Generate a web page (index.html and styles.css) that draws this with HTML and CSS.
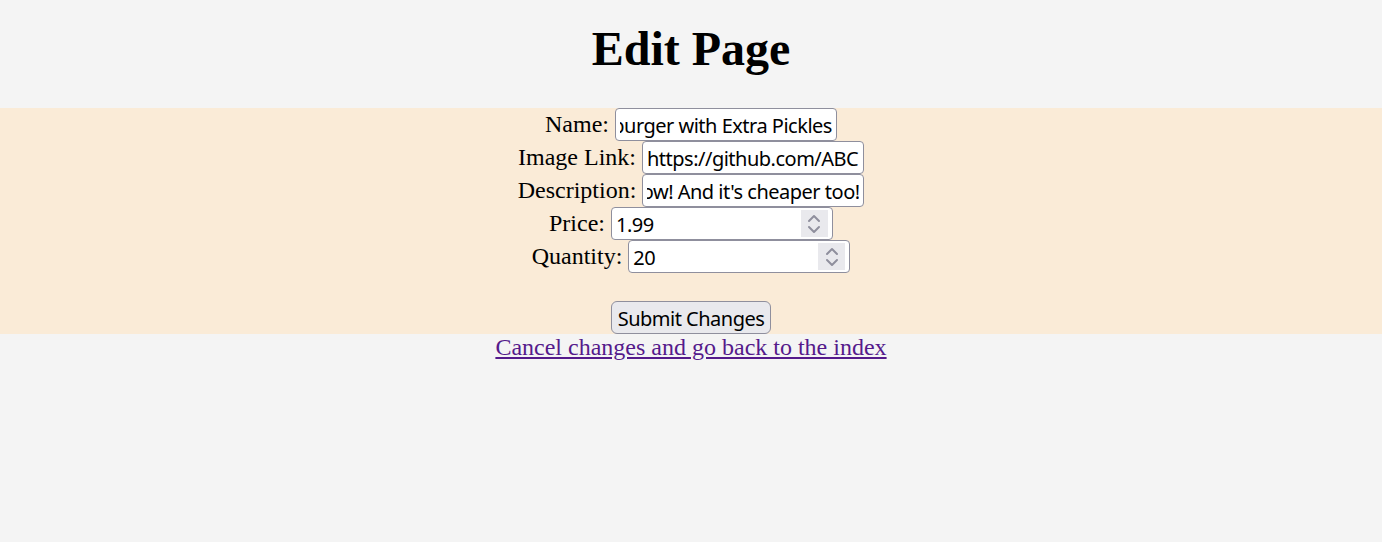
FILE: index.html
```html
<!DOCTYPE html>
<html lang="en">
<head>
<meta charset="utf-8">
<title>Edit Page</title>
<link rel="stylesheet" href="styles.css">
</head>
<body>
<h1 class="title">Edit Page</h1>
<form class="edit-form" action="#">
  <div class="row"><label for="name">Name:</label> <input class="field scroll-end" id="name" type="text" value="Hamburger with Extra Pickles"></div>
  <div class="row"><label for="image">Image Link:</label> <input class="field" id="image" type="text" value="https://github.com/ABCDEF/images/burger.png"></div>
  <div class="row"><label for="desc">Description:</label> <input class="field scroll-end" id="desc" type="text" value="Just like the classic burger, but with extra pickles now! And it's cheaper too!"></div>
  <div class="row"><label for="price">Price:</label> <span class="num-field"><input class="num-input" id="price" type="number" step="0.01" value="1.99"><span class="spin"><svg viewBox="0 0 14 22" width="14" height="22"><path d="M2 8 L7 3 L12 8" /><path d="M2 14 L7 19 L12 14" /></svg></span></span></div>
  <div class="row"><label for="qty">Quantity:</label> <span class="num-field"><input class="num-input" id="qty" type="number" value="20"><span class="spin"><svg viewBox="0 0 14 22" width="14" height="22"><path d="M2 8 L7 3 L12 8" /><path d="M2 14 L7 19 L12 14" /></svg></span></span></div>
  <div class="spacer"></div>
  <div class="row"><button class="submit" type="submit">Submit Changes</button></div>
</form>
<a class="cancel" href="#">Cancel changes and go back to the index</a>
<script>
document.querySelectorAll('.scroll-end').forEach(function (el) { el.scrollLeft = el.scrollWidth; });
</script>
</body>
</html>
```

FILE: styles.css
```css
html, body {
  margin: 0;
  padding: 0;
}
body {
  background: #f4f4f4;
  font-family: "Liberation Serif", "Times New Roman", serif;
  font-size: 24px;
  color: #000;
  text-align: center;
}
.title {
  font-size: 48px;
  font-weight: bold;
  line-height: 53px;
  margin: 22px 0 33px;
}
.edit-form {
  background: #faebd7;
  margin: 0;
}
.row {
  line-height: 33px;
  height: 33px;
  white-space: nowrap;
}
.spacer {
  height: 28px;
}
.field,
.num-field {
  box-sizing: border-box;
  width: 222px;
  height: 33px;
  vertical-align: top;
  border: 1.5px solid #8f8f9d;
  border-radius: 4px;
  background: #fff;
}
.field,
.num-input,
.submit {
  font-family: "Noto Sans", "Open Sans", sans-serif;
  font-size: 20px;
  letter-spacing: -0.5px;
  color: #000;
}
.field {
  padding: 1px 4px 0;
  margin: 0;
}
.num-field {
  display: inline-flex;
  align-items: center;
  padding: 0 4px 0 4px;
}
.num-input {
  flex: 1;
  min-width: 0;
  border: none;
  outline: none;
  padding: 1px 0 0;
  margin: 0;
  background: transparent;
  height: 100%;
  -moz-appearance: textfield;
  appearance: textfield;
}
.num-input::-webkit-inner-spin-button,
.num-input::-webkit-outer-spin-button {
  -webkit-appearance: none;
  margin: 0;
}
.spin {
  display: flex;
  align-items: center;
  justify-content: center;
  width: 27px;
  height: 27px;
  background: #e9e9ed;
}
.spin svg {
  display: block;
  fill: none;
  stroke: #8f8f9d;
  stroke-width: 2;
  stroke-linecap: round;
  stroke-linejoin: round;
}
.submit {
  box-sizing: border-box;
  height: 33px;
  width: 160px;
  vertical-align: top;
  margin: 0;
  padding: 1px 4px 0;
  background: #e9e9ed;
  border: 1.5px solid #8f8f9d;
  border-radius: 6px;
}
.cancel {
  color: #551a8b;
  font-size: 24px;
}
```
